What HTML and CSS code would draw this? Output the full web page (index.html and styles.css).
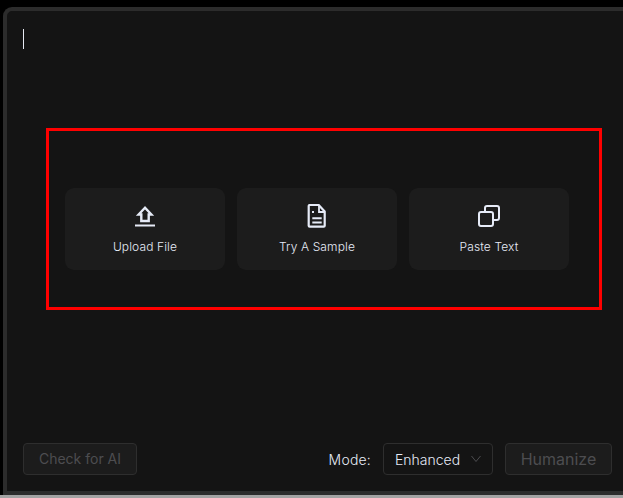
FILE: index.html
```html
<!DOCTYPE html>
<html lang="en">
<head>
<meta charset="utf-8">
<title>Humanize</title>
<link rel="stylesheet" href="styles.css">
</head>
<body>
<main class="panel">
  <div class="caret"></div>
  <div class="actions">
    <button class="action" type="button">
      <svg class="icon" viewBox="0 0 24 24" fill="none" stroke="currentColor" stroke-width="2.400"><path d="M12 3.700 5.600 10.500H8.300V17h7.400v-6.500h2.700z"/><path d="M2 21.500h20" stroke-width="2"/></svg>
      <span>Upload File</span>
    </button>
    <button class="action" type="button">
      <svg class="icon" viewBox="0 0 24 24" fill="none" stroke="currentColor" stroke-width="2.200"><path d="M3.700 2a1 1 0 0 1 1-1h9l6 6.500V21.700a1 1 0 0 1-1 1H4.700a1 1 0 0 1-1-1z" stroke-linejoin="round"/><path d="M14 2v6h6" stroke-width="1.800"/><path d="M7.300 14.300h9.400M7.300 18.600h9.400" stroke-width="2"/><path d="M7 8h2" stroke-width="2"/></svg>
      <span>Try A Sample</span>
    </button>
    <button class="action" type="button">
      <svg class="icon" viewBox="0 0 24 24" fill="none" stroke="currentColor" stroke-width="2"><rect x="2" y="8" width="14" height="14" rx="2"/><path d="M8 8V4a2 2 0 0 1 2-2h10a2 2 0 0 1 2 2v10a2 2 0 0 1-2 2h-4"/></svg>
      <span>Paste Text</span>
    </button>
  </div>
  <footer class="toolbar">
    <button class="btn btn-check" type="button" disabled>Check for AI</button>
    <div class="controls">
      <span class="mode-label">Mode:</span>
      <div class="select">
        <span>Enhanced</span>
        <svg class="chevron" viewBox="0 0 10 8" fill="none" stroke="currentColor" stroke-width="1"><path d="M.5 1 5 6.500 9.500 1"/></svg>
      </div>
      <button class="btn btn-humanize" type="button" disabled>Humanize</button>
    </div>
  </footer>
  <div class="highlight"></div>
</main>
<div class="strip"></div>
</body>
</html>
```

FILE: styles.css
```css
* { box-sizing: border-box; }

html, body {
  margin: 0;
  height: 498px;
  overflow: hidden;
  background: #000;
  font-family: Inter, "Liberation Sans", sans-serif;
}

body {
  display: flex;
  flex-direction: column;
  padding-top: 7px;
}

.panel {
  position: relative;
  margin-left: 3px;
  height: 488px;
  display: flex;
  flex-direction: column;
  background: #141414;
  border: 4px solid #2c2c2c;
  border-right: 0;
  border-top-left-radius: 9px;
}

.strip {
  height: 3px;
  background: #a3a3a3;
}

.caret {
  width: 1px;
  height: 20px;
  margin: 18px 0 0 16px;
  background: #e6e9f2;
}

.actions {
  display: flex;
  gap: 12px;
  margin: 139px 0 0 58px;
}

.action {
  width: 160px;
  height: 82px;
  padding: 16px 0 0;
  display: flex;
  flex-direction: column;
  align-items: center;
  gap: 11px;
  border: 0;
  border-radius: 9px;
  background: #1c1c1c;
  color: #e6ebf7;
  font: 300 12px/16px Inter, "Liberation Sans", sans-serif;
  letter-spacing: 0.12px;
}

.icon {
  width: 24px;
  height: 24px;
  display: block;
}

.toolbar {
  margin-top: auto;
  padding: 0 11px 16px 16px;
  display: flex;
  justify-content: space-between;
  align-items: center;
}

.controls {
  display: flex;
  align-items: center;
}

.btn {
  height: 32px;
  padding: 0;
  border: 1px solid #2e2e2e;
  border-radius: 4px;
  background: #1c1c1c;
  color: #4d4d50;
  font: 400 14px/20px Inter, "Liberation Sans", sans-serif;
}

.btn-check { width: 114px; }

.btn-humanize {
  width: 107px;
  margin-left: 12px;
  font-size: 16px;
}

.mode-label {
  margin-right: 12px;
  color: #e6ebf7;
  font-size: 14px;
  font-weight: 300;
  letter-spacing: 0.2px;
}

.select {
  width: 110px;
  height: 32px;
  padding: 0 11px;
  display: flex;
  align-items: center;
  justify-content: space-between;
  border: 1px solid #2e2e2e;
  border-radius: 4px;
  background: #141414;
  color: #e6ebf7;
  font-size: 14px;
  font-weight: 300;
}

.chevron {
  width: 10px;
  height: 8px;
  color: #4d4d50;
}

.highlight {
  position: absolute;
  left: 39px;
  top: 117px;
  width: 556px;
  height: 182px;
  border: 3px solid #ff0000;
}
```
